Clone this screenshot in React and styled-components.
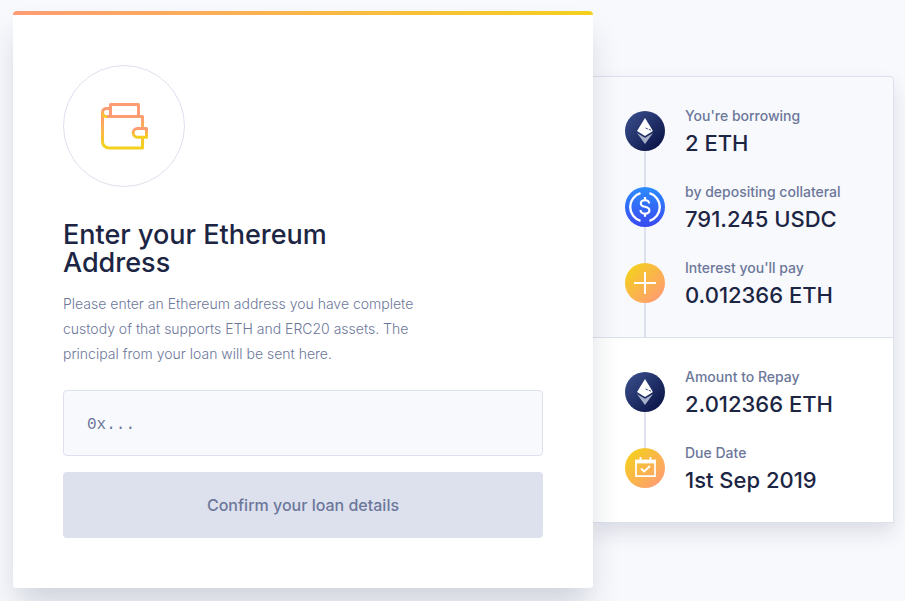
import React, { useState } from 'react';
import styled, { createGlobalStyle } from 'styled-components';

const GlobalStyle = createGlobalStyle`
    * {
        box-sizing: border-box;
    }

    body {
        margin: 0;
        background-color: #f8f9fd;
        color: #1c2543;
        font-family: Inter, "Liberation Sans", sans-serif;
    }
`

const Page = styled.main`
    display: flex;
    align-items: flex-start;
    min-height: 100vh;
    overflow: hidden;
    padding: 11px 11px 13px 13px;
`

const CardShadow = styled.div`
    position: relative;
    z-index: 1;
    flex: 1;
    display: flex;
    border-radius: 4px;
    box-shadow: 0 20px 30px -4px rgba(28, 37, 67, 0.18);
`

const Card = styled.form`
    flex: 1;
    background-color: white;
    border-radius: 4px;
    overflow: hidden;
    padding-bottom: 50px;
`

const TopBar = styled.div`
    height: 4px;
    margin-bottom: 50px;
    background: linear-gradient(90deg, #ff9c73, #f4d01e);
`

const Content = styled.div`
    padding: 0 50px;
    display: flex;
    flex-direction: column;
`

const IconCircle = styled.div`
    height: 122px;
    width: 122px;
    border: 1px solid #dde1ee;
    border-radius: 50%;
    display: flex;
    justify-content: center;
    align-items: center;
`

const Title = styled.h1`
    max-width: 300px;
    margin: 34px 0 14px;
    font-size: 27px;
    line-height: 28px;
    font-weight: 500;
`

const Text = styled.p`
    max-width: 370px;
    margin: 0 0 24px;
    color: #6c779a;
    font-size: 14px;
    line-height: 25px;
    font-weight: 300;
`

const Input = styled.input`
    height: 66px;
    width: 100%;
    margin-bottom: 16px;
    padding: 3px 23px 0;
    border: 1px solid #dde1ee;
    border-radius: 4px;
    background-color: #f8f9fd;
    color: #1c2543;
    font-family: "Liberation Mono", monospace;
    font-size: 16px;

    &::placeholder {
        color: #6c779a;
        opacity: 1;
    }
`

const Button = styled.button`
    height: 66px;
    border: none;
    border-radius: 4px;
    background-color: #dde1ee;
    color: #6c779a;
    font-family: inherit;
    font-size: 16px;
    font-weight: 500;
`

const Summary = styled.aside`
    flex: 0 0 301px;
    margin-top: 65px;
    border: 1px solid #dde1ee;
    border-left: none;
    border-radius: 0 4px 0 0;
    box-shadow: 0 10px 20px rgba(28, 37, 67, 0.12);
`

const Section = styled.section`
    position: relative;
    display: flex;
    flex-direction: column;
    gap: 22px;
    padding: 27px 20px 27px 32px;
    background-color: ${props => props.$white ? 'white' : '#f8f9fd'};
    border-top: ${props => props.$white ? '1px solid #dde1ee' : 'none'};
    border-radius: ${props => props.$white ? '0' : '0 4px 0 0'};
`

const Row = styled.div`
    display: flex;
    align-items: center;
    gap: 20px;
`

const Marker = styled.div`
    position: relative;
    height: 40px;
    width: 40px;

    svg {
        display: block;
    }

    /* line down to the next marker */
    &::after {
        content: '';
        display: ${props => props.$line ? 'block' : 'none'};
        position: absolute;
        top: 40px;
        left: 19px;
        height: 36px;
        width: 2px;
        background-color: #dde1ee;
    }
`

const Label = styled.div`
    color: #6c779a;
    font-size: 14px;
    line-height: 24px;
    font-weight: 500;
`

const Value = styled.div`
    font-size: 22px;
    line-height: 30px;
    font-weight: 500;
`

function WalletIcon() {
    return (
        <svg width="48" height="48" viewBox="0 0 48 48" fill="none" strokeWidth="3" strokeLinejoin="round">
            <defs>
                <linearGradient id="wallet" gradientUnits="userSpaceOnUse" x1="0" y1="14" x2="0" y2="44">
                    <stop stopColor="#ff9c73" />
                    <stop offset="1" stopColor="#f4d01e" />
                </linearGradient>
                <linearGradient id="roll" gradientUnits="userSpaceOnUse" x1="0" y1="8" x2="0" y2="15">
                    <stop stopColor="#ff9c73" />
                    <stop offset="1" stopColor="#f4d01e" />
                </linearGradient>
                <linearGradient id="clasp" gradientUnits="userSpaceOnUse" x1="0" y1="27" x2="0" y2="35">
                    <stop stopColor="#ff9c73" />
                    <stop offset="1" stopColor="#f4d01e" />
                </linearGradient>
            </defs>
            <path d="M2.500 10.500V39.500A6.500 6.500 0 0 0 9 46H42.500V36M42.500 26V14.500H7" stroke="url(#wallet)" />
            <path d="M10.500 6.500H7A4 4 0 0 0 2.500 10.500A4 4 0 0 0 7 14.500" stroke="url(#roll)" />
            <path d="M10.500 14V2.500H38.500V14" stroke="#ff9c73" />
            <path d="M46.500 26.500H37.500A4.300 4.300 0 0 0 37.500 35.200H46.500Z" stroke="url(#clasp)" />
        </svg>
    )
}

function EthIcon({ id }) {
    return (
        <svg width="40" height="40" viewBox="0 0 40 40">
            <defs>
                <linearGradient id={id} x1="0" y1="0" x2="1" y2="1">
                    <stop offset="0.1" stopColor="#374b88" />
                    <stop offset="0.9" stopColor="#0b1548" />
                </linearGradient>
            </defs>
            <circle cx="20" cy="20" r="20" fill={`url(#${id})`} />
            <path d="M20 7L28 20L20 25L12 20Z" fill="white" />
            <path d="M20.500 17L27.500 19.800" stroke="#26356c" strokeWidth="0.9" strokeDasharray="2.500 1" />
            <path d="M12 22L20 26.700L28 22L20 33Z" fill="#a9b0c9" />
        </svg>
    )
}

function UsdcIcon() {
    return (
        <svg width="40" height="40" viewBox="0 0 40 40" fill="none" stroke="white">
            <defs>
                <linearGradient id="usdc" x1="0" y1="0" x2="0" y2="1">
                    <stop stopColor="#2b8cff" />
                    <stop offset="1" stopColor="#3a49f0" />
                </linearGradient>
            </defs>
            <circle cx="20" cy="20" r="20" fill="url(#usdc)" stroke="none" />
            <path d="M15.500 6.200A14.400 14.400 0 0 0 15.500 33.800M24.500 6.200A14.400 14.400 0 0 1 24.500 33.800" strokeWidth="2.400" />
            <path d="M24.200 16.500C24 14.300 22.300 13.200 20 13.200C17.500 13.200 15.800 14.500 15.800 16.400C15.800 21.300 24.400 18.200 24.400 23.200C24.400 25.500 22.500 26.600 20 26.600C17.400 26.600 15.600 25.400 15.500 23" strokeWidth="2.100" />
            <path d="M20 10V13.500M20 26.500V29.800" strokeWidth="2.200" />
        </svg>
    )
}

function PlusIcon() {
    return (
        <svg width="40" height="40" viewBox="0 0 40 40">
            <defs>
                <linearGradient id="plus" x1="0" y1="0" x2="1" y2="1">
                    <stop offset="0.1" stopColor="#f4d01e" />
                    <stop offset="0.9" stopColor="#ff9c73" />
                </linearGradient>
            </defs>
            <circle cx="20" cy="20" r="20" fill="url(#plus)" />
            <path d="M20 9V31M9 20H31" stroke="white" strokeWidth="2" />
        </svg>
    )
}

function CalendarIcon() {
    return (
        <svg width="40" height="40" viewBox="0 0 40 40" fill="none" stroke="white">
            <defs>
                <linearGradient id="calendar" x1="0" y1="0" x2="1" y2="1">
                    <stop offset="0.1" stopColor="#f4d01e" />
                    <stop offset="0.9" stopColor="#ff9c73" />
                </linearGradient>
            </defs>
            <circle cx="20" cy="20" r="20" fill="url(#calendar)" stroke="none" />
            <path d="M11 12.500H30V28.200H11Z" strokeWidth="1.700" />
            <path d="M10.200 13.600H30.800" strokeWidth="3.600" />
            <path d="M15.500 9V13M25.500 9V13" strokeWidth="1.800" />
            <path d="M16 20.500L19.200 23.500L25 18" strokeWidth="1.900" />
        </svg>
    )
}

const loan = [
    { label: "You're borrowing", value: '2 ETH', icon: <EthIcon id="ethBorrow" /> },
    { label: 'by depositing collateral', value: '791.245 USDC', icon: <UsdcIcon /> },
    { label: "Interest you'll pay", value: '0.012366 ETH', icon: <PlusIcon /> },
]

const repay = [
    { label: 'Amount to Repay', value: '2.012366 ETH', icon: <EthIcon id="ethRepay" /> },
    { label: 'Due Date', value: '1st Sep 2019', icon: <CalendarIcon /> },
]

export default function App() {
    const [address, setAddress] = useState('');

    return (
        <Page>
            <GlobalStyle />
            <CardShadow>
                <Card onSubmit={e => e.preventDefault()}>
                    <TopBar />
                    <Content>
                        <IconCircle>
                            <WalletIcon />
                        </IconCircle>
                        <Title>Enter your Ethereum Address</Title>
                        <Text>
                            Please enter an Ethereum address you have complete custody of that supports ETH and ERC20 assets. The principal from your loan will be sent here.
                        </Text>
                        <Input
                            type="text"
                            aria-label="Ethereum address"
                            placeholder="0x..."
                            value={address}
                            onChange={e => setAddress(e.target.value)}
                        />
                        <Button type="submit" disabled={!address}>Confirm your loan details</Button>
                    </Content>
                </Card>
            </CardShadow>
            <Summary>
                <Section>
                    {loan.map(item => (
                        <Row key={item.label}>
                            <Marker $line>{item.icon}</Marker>
                            <div>
                                <Label>{item.label}</Label>
                                <Value>{item.value}</Value>
                            </div>
                        </Row>
                    ))}
                </Section>
                <Section $white>
                    {repay.map((item, i) => (
                        <Row key={item.label}>
                            <Marker $line={i < repay.length - 1}>{item.icon}</Marker>
                            <div>
                                <Label>{item.label}</Label>
                                <Value>{item.value}</Value>
                            </div>
                        </Row>
                    ))}
                </Section>
            </Summary>
        </Page>
    )
}
